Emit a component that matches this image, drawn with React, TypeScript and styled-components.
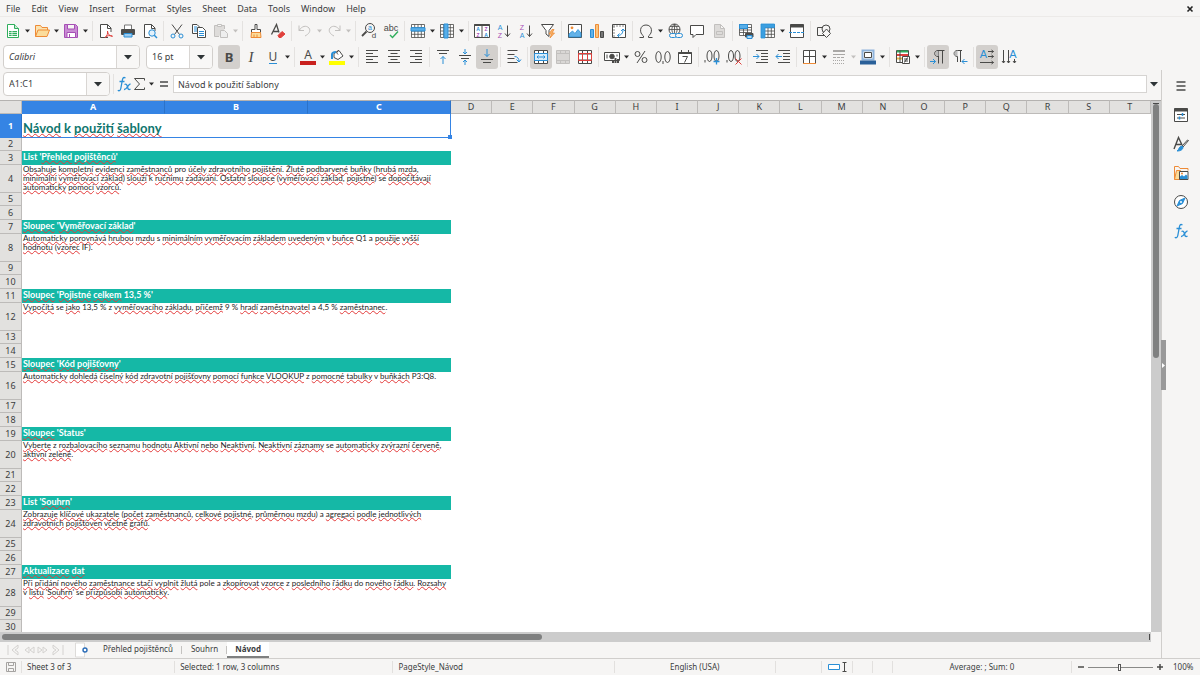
import React from "react";
import styled, { createGlobalStyle, css } from "styled-components";

/* ---------- palette ---------- */
const ink = "#4a4a48";
const blue = "#2a8fd6";
const red = "#e0403c";
const orange = "#ee8b36";
const purple = "#a64fb5";
const green = "#2fae5c";
const off = "#c2c0be";
const chrome = "#f6f5f4";
const teal = "#15b8a6";

const GlobalStyle = createGlobalStyle`
  * { box-sizing: border-box; }
  body { margin: 0; background: ${chrome}; color: #3b3d3e; font-family: "Noto Sans", sans-serif; font-size: 9px; line-height: 12px; }
  button, input { font: inherit; color: inherit; border: 0; padding: 0; margin: 0; background: none; outline: 0; }
`;

/* ---------- frame ---------- */
const Window = styled.div`
  display: flex;
  flex-direction: column;
  height: 100vh;
  overflow: hidden;
`;

const MenuBar = styled.nav`
  display: flex;
  align-items: center;
  gap: 11px;
  height: 16px;
  padding: 1px 6px 0;
  flex: none;
`;

const MenuItem = styled.button`
  white-space: nowrap;
`;

const CloseButton = styled.button`
  display: flex;
  margin-left: auto;
`;

const Toolbar = styled.div`
  display: flex;
  align-items: center;
  height: 28px;
  padding-left: 2px;
  flex: none;
  border-top: 1px solid #eceae8;
`;

const FormatBar = styled(Toolbar)`
  height: 26px;
  padding-left: 3px;
  border-top: 0;
`;

const ToolButton = styled.button<{ $pressed?: boolean }>`
  display: flex;
  align-items: center;
  justify-content: center;
  width: 22px;
  height: 24px;
  flex: none;
  border-radius: 3px;
  background: ${(p) => (p.$pressed ? "#d3d0cd" : "transparent")};
`;

const MenuArrow = styled.button<{ $muted?: boolean }>`
  display: flex;
  align-items: center;
  justify-content: center;
  width: 7px;
  height: 24px;
  flex: none;
  color: ${(p) => (p.$muted ? off : "#2b2b2b")};
`;

const Divider = styled.span<{ $afterMenu?: boolean }>`
  display: flex;
  justify-content: center;
  width: ${(p) => (p.$afterMenu ? 6 : 5)}px;
  flex: none;
  &::before {
    content: "";
    width: 1px;
    height: 20px;
    background: #e4e2e0;
  }
`;

const Combo = styled.div<{ $width: number; $gap: number }>`
  display: flex;
  width: ${(p) => p.$width}px;
  height: 24px;
  margin-right: ${(p) => p.$gap}px;
  flex: none;
  background: #fff;
  border: 1px solid #d2cfcc;
  border-radius: 4px;
  overflow: hidden;
`;

const ComboInput = styled.input<{ $italic?: boolean }>`
  flex: 1;
  min-width: 0;
  padding-left: 5px;
  font-style: ${(p) => (p.$italic ? "italic" : "normal")};
`;

const ComboArrow = styled.button`
  display: flex;
  align-items: center;
  justify-content: center;
  width: 23px;
  background: #f8f7f6;
  border-left: 1px solid #d9d6d3;
`;

const Main = styled.div`
  display: flex;
  flex: 1;
  min-height: 0;
`;

const Workspace = styled.main`
  display: flex;
  flex-direction: column;
  flex: 1;
  min-width: 0;
`;

const FormulaBar = styled.div`
  display: flex;
  align-items: center;
  height: 28px;
  margin-bottom: 2px;
  padding-left: 3px;
  flex: none;
`;

const FormulaButton = styled.button<{ $width: number }>`
  display: flex;
  align-items: center;
  justify-content: center;
  width: ${(p) => p.$width}px;
  height: 20px;
  flex: none;
`;

const FormulaInput = styled.input`
  flex: 1;
  min-width: 0;
  height: 18px;
  padding-left: 4px;
  background: #fff;
  border: 1px solid #d6d4d2;
`;

/* ---------- sheet ---------- */
const SheetArea = styled.div`
  display: flex;
  flex: 1;
  min-height: 0;
`;

const Viewport = styled.div`
  flex: 1;
  min-width: 0;
  overflow: hidden;
  background: #fff;
`;

const Grid = styled.table`
  width: 100%;
  table-layout: fixed;
  border-collapse: separate;
  border-spacing: 0;
`;

const LeadCol = styled.col`
  width: 22px;
`;

const WideCol = styled.col`
  width: 143px;
`;

const headCell = css<{ $active?: boolean }>`
  padding: 0;
  text-align: center;
  font-size: 9px;
  line-height: 12px;
  font-weight: ${(p) => (p.$active ? 700 : 400)};
  color: ${(p) => (p.$active ? "#fff" : "#3b3d3e")};
  background: ${(p) => (p.$active ? "#3584e4" : "#e2e1df")};
  border-right: 1px solid ${(p) => (p.$active ? "#2b72c8" : "#bdbbb9")};
  border-bottom: 1px solid ${(p) => (p.$active ? "#3584e4" : "#bdbbb9")};
`;

const ColumnHead = styled.th<{ $active?: boolean }>`
  ${headCell}
  height: 14px;
  border-top: 1px solid #b4b2b0;
`;

const RowHead = styled.th<{ $active?: boolean }>`
  ${headCell}
  vertical-align: middle;
`;

const SheetRow = styled.tr<{ $height: number }>`
  height: ${(p) => p.$height}px;
`;

type CellKind = "title" | "heading" | "body" | "empty";

const cellLook = {
  title: css`
    position: relative;
    padding-top: 6px;
    border: 1px solid #3584e4;
    border-width: 0 1px 1px 0;
    color: #0f766e;
    font-size: 13px;
    line-height: 17px;
    font-weight: 700;
  `,
  heading: css`
    background: ${teal};
    color: #fff;
    font-size: 9px;
    line-height: 12px;
    font-weight: 700;
  `,
  body: css`
    color: #1c1c1c;
    font-size: 8px;
    line-height: 9px;
  `,
  empty: css``,
};

const Cell = styled.td<{ $kind: CellKind }>`
  padding: 0 0 0 1px;
  vertical-align: top;
  white-space: nowrap;
  font-family: Lato, sans-serif;
  ${(p) => cellLook[p.$kind]}
`;

const Handle = styled.span`
  position: absolute;
  right: -2px;
  bottom: -2px;
  width: 4px;
  height: 4px;
  background: #3584e4;
`;

const Line = styled.div``;

const Misspelt = styled.span`
  text-decoration: underline wavy #e33b3b 1px;
  text-decoration-skip-ink: none;
  text-underline-offset: 0;
`;

const VScroll = styled.div`
  display: flex;
  flex-direction: column;
  align-items: center;
  width: 10px;
  padding-top: 2px;
  flex: none;
  background: #cccccc;
  border-top: 1px solid #a8a6a4;
`;

const VThumb = styled.div`
  width: 6px;
  height: 48%;
  border-radius: 3px;
  background: #7f8080;
`;

const HScroll = styled.div`
  display: flex;
  align-items: center;
  height: 10px;
  margin-right: 10px;
  padding: 0 1px 0 2px;
  flex: none;
  background: #cccccc;
`;

const HThumb = styled.div`
  width: 47%;
  height: 6px;
  border-radius: 3px;
  background: #7f8080;
`;

const SplitMark = styled.span<{ $flat?: boolean }>`
  width: ${(p) => (p.$flat ? 6 : 1)}px;
  height: ${(p) => (p.$flat ? 1 : 6)}px;
  flex: none;
  margin-left: ${(p) => (p.$flat ? "0" : "auto")};
  background: #4a4a4a;
`;

/* ---------- tabs ---------- */
const TabBar = styled.div`
  display: flex;
  align-items: center;
  height: 16px;
  padding-left: 5px;
  flex: none;
  font-size: 8px;
`;

const TabNav = styled.div`
  display: flex;
  width: 70px;
`;

const TabNavButton = styled.button`
  display: flex;
  justify-content: center;
  width: 15px;
`;

const AddTab = styled.button`
  display: flex;
  width: 19px;
`;

const Tab = styled.button<{ $active?: boolean }>`
  height: 16px;
  padding: ${(p) => (p.$active ? "0 8px" : "0 8px 0 9px")};
  background: ${(p) => (p.$active ? "#fff" : "transparent")};
  border-bottom: 2px solid ${(p) => (p.$active ? "#7f8080" : "transparent")};
  font-weight: ${(p) => (p.$active ? 700 : 400)};
  white-space: nowrap;
`;

const TabRule = styled.span`
  width: 1px;
  height: 8px;
  background: #c4c2c0;
`;

/* ---------- sidebar ---------- */
const Sidebar = styled.aside`
  position: relative;
  display: flex;
  flex-direction: column;
  align-items: center;
  gap: 9px;
  width: 39px;
  padding-top: 6px;
  flex: none;
  border-left: 1px solid #d0cecc;
`;

const SidebarButton = styled.button`
  display: flex;
  align-items: center;
  justify-content: center;
  width: 24px;
  height: 20px;
`;

const Grip = styled.button`
  position: absolute;
  left: -1px;
  top: 46%;
  display: flex;
  align-items: center;
  justify-content: center;
  width: 5px;
  height: 50px;
  background: #999;
`;

/* ---------- status bar ---------- */
const StatusBar = styled.footer`
  display: grid;
  grid-template-columns: 22px 153fr 218fr 221fr 161fr 46px 31px 20px 20px 179fr 128px;
  align-items: center;
  height: 17px;
  flex: none;
  border-top: 1px solid #d0cecc;
  font-size: 8px;
`;

const StatusCell = styled.div<{ $center?: boolean }>`
  display: flex;
  align-items: center;
  justify-content: ${(p) => (p.$center ? "center" : "flex-start")};
  height: 12px;
  padding-left: ${(p) => (p.$center ? 0 : 5)}px;
  border-right: 1px solid #e2e0de;
  white-space: nowrap;
`;

const ZoomCell = styled.div`
  display: flex;
  align-items: center;
  padding-left: 5px;
`;

const ZoomStep = styled.button`
  display: flex;
  align-items: center;
  justify-content: center;
  width: 8px;
  height: 12px;
`;

const ZoomRange = styled.input`
  appearance: none;
  width: 65px;
  height: 12px;
  margin: 0 3px;
  &::-webkit-slider-runnable-track {
    height: 1px;
    background: #8a8a88;
  }
  &::-webkit-slider-thumb {
    appearance: none;
    width: 3px;
    height: 7px;
    margin-top: -3px;
    background: #fff;
    border: 1px solid #555;
  }
`;

const ZoomValue = styled.span`
  margin-left: 9px;
`;

/* ---------- drawings ---------- */
const Art = ({ children, w = 16, h = 16 }: { children: React.ReactNode; w?: number; h?: number }) => (
  <svg width={w} height={h} viewBox={`0 0 ${w} ${h}`} fill="none" stroke={ink} strokeWidth="1" overflow="visible" aria-hidden="true">
    {children}
  </svg>
);

const Down = ({ big }: { big?: boolean }) =>
  big ? (
    <svg width="8" height="5" viewBox="0 0 8 5" fill="#2e3436" aria-hidden="true"><path d="M0 0h8L4 4.5z" /></svg>
  ) : (
    <svg width="5" height="4" viewBox="0 0 5 4" fill="currentColor" aria-hidden="true"><path d="M0 .5h5L2.5 3.5z" /></svg>
  );

const Glyph = ({ x, y, size, fill, children, weight, family, italic }: { x: number; y: number; size: number; fill: string; children: string; weight?: number; family?: string; italic?: boolean }) => (
  <text x={x} y={y} fontSize={size} fill={fill} stroke="none" textAnchor="middle" fontWeight={weight ?? 400} fontStyle={italic ? "italic" : "normal"} fontFamily={family ?? '"Liberation Sans", sans-serif'}>
    {children}
  </text>
);

const gridPath = "M1.5 1.5h13v13h-13zM1.5 4.7h13M1.5 8h13M1.5 11.3h13M4.7 1.5v13M8 1.5v13M11.3 1.5v13";

const icons: Record<string, React.ReactNode> = {
  new: (<><path d="M2.5 1.5h7l4 4v9h-11z" stroke={green} fill="#fff" /><path d="M9.5 1.5v4h4" stroke={green} fill="#c9ecd3" /><path d="M4 8h8v5H4z" fill={green} stroke="none" /><path d="M4 9.5h8M4 11.5h8M7 8v5" stroke="#fff" strokeWidth=".7" /></>),
  open: (<><path d="M1.5 13.5V2.5h5l1.5 2h5.5v3" stroke={orange} fill="#fbe3b0" /><path d="M1.5 13.5l2.500-6.500h11.5l-2.500 6.500z" stroke={orange} fill="#fbdc9b" /></>),
  save: (<><path d="M1.5 1.5h11l2 2v11h-13z" fill="#c98bd4" stroke={purple} /><path d="M4.5 1.5h7v4.5h-7z" fill="#f6f5f4" stroke={purple} /><path d="M4 9.5h8.500v5H4z" fill="#fff" stroke={purple} /><path d="M6.5 11v3" stroke={purple} /></>),
  pdf: (<><path d="M10 14.5H2.5v-13h7l3.500 3.500v4" fill="#fff" /><path d="M9.5 1.5v4H13" /><path d="M7 14.5c2-1.500 3-4 2.500-6.500M9.5 8c0 3 2 5 5 5.500M7 14.5c2-2 5-2.500 7.500-1.500" stroke={red} /></>),
  print: (<><path d="M4.5 6V2h7v4" fill="#fff" stroke="#777" /><rect x="1" y="6" width="14" height="6" rx="1" fill="#4d4d4b" stroke="none" /><path d="M4 10.5h8v3.500H4z" fill="#9ccbee" stroke={blue} /></>),
  preview: (<><path d="M8 14.5H2.5v-13h7l3.500 3.500v3" fill="#fff" /><path d="M9.5 1.5v4H13" /><circle cx="10" cy="10" r="3.2" stroke={blue} fill="#e3f1fb" /><path d="M12.3 12.3l2.700 2.700" stroke={blue} strokeWidth="1.5" /></>),
  cut: (<><path d="M3 1.5l7.500 10M13 1.5L5.5 11.5" /><circle cx="4" cy="13" r="2" stroke={blue} /><circle cx="12" cy="13" r="2" stroke={blue} /></>),
  copy: (<><path d="M6 10.5H1.5v-9H6l2.500 2.500" fill="#fff" /><path d="M3 4h3M3 6h3M3 8h3" stroke={blue} /><path d="M6.5 4.5h5l3 3v7h-8z" fill="#fff" /><path d="M8 8.5h5M8 10.5h5M8 12.5h5" stroke={blue} /></>),
  paste: (<g stroke={off}><path d="M6 13.5H1.5v-11h10V6" fill="#dedcda" /><path d="M4.5 1.5h4v2h-4z" fill={chrome} /><path d="M7.5 7.5h4l3 3v4h-7z" fill="#eee" /></g>),
  brush: (<><path d="M7 1.5h2v5h3.500v3h-9v-3H7z" fill="#fff" /><path d="M3.5 9.5h9l.5 5H3z" fill="#fbdc9b" stroke={orange} /><path d="M6 14.5v-3M9 14.5v-3" stroke={orange} /></>),
  clear: (<><path d="M1.5 11.5L6.5 1.5l2.500 8M3.5 8.5h5" strokeWidth="1.300" /><path d="M8 12.5l4-4 3 2.500-4 3.500H9z" fill={red} stroke={red} /></>),
  undo: <path d="M2 2.5v5h5M2 7.5C5 3 9 2 12 5c2 3 0 6-4 8" stroke={off} />,
  redo: <path d="M14 2.5v5H9M14 7.5C11 3 7 2 4 5c-2 3 0 6 4 8" stroke={off} />,
  find: (<><circle cx="9" cy="5" r="4.5" /><path d="M5.5 8.5L1 13" strokeWidth="1.800" /><Glyph x={9} y={7} size={7} fill={blue}>a</Glyph><Glyph x={13} y={15} size={8} fill={ink}>d</Glyph></>),
  spell: (<><Glyph x={8} y={8} size={9} fill={ink}>abc</Glyph><path d="M7 12l2.500 2.500L15 8.5" stroke={green} strokeWidth="1.400" /></>),
  row: (<><path d={gridPath} fill="#fff" strokeWidth=".8" /><path d="M1 4.700h14v3.300H1z" fill="#58aee8" stroke={blue} /></>),
  column: (<><path d={gridPath} fill="#fff" strokeWidth=".8" /><path d="M5 1h4v14H5z" fill="#58aee8" stroke={blue} /></>),
  sort: (<><path d="M.5 1.5h15v13H.5zM8 1.5v13" fill="#fff" /><path d="M.5 2h15" strokeWidth="2" /><Glyph x={4} y={8} size={5} fill={blue} weight={700}>A</Glyph><Glyph x={4} y={14} size={5} fill={purple} weight={700}>Z</Glyph><Glyph x={12} y={8} size={5} fill={purple} weight={700}>Z</Glyph><Glyph x={12} y={14} size={5} fill={blue} weight={700}>A</Glyph></>),
  sortAsc: (<><Glyph x={4} y={7} size={7} fill={blue}>A</Glyph><Glyph x={4} y={15} size={7} fill={purple}>Z</Glyph><path d="M11.5 2.5v11M9 10.5l2.500 3 2.500-3" /></>),
  sortDesc: (<><Glyph x={4} y={7} size={7} fill={purple}>Z</Glyph><Glyph x={4} y={15} size={7} fill={blue}>A</Glyph><path d="M11.5 2.5v11M9 10.5l2.500 3 2.500-3" /></>),
  filter: (<><path d="M1.5 1.5h12l-4.500 6v6l-3-2.500V7.5z" fill="#fff" /><path d="M12 6.5l-3 4.500h2.500l-1.500 4 4.500-5H12l2-3.500z" fill="#f8b36a" stroke={orange} strokeWidth=".8" /></>),
  image: (<><path d="M1.5 1.5h13v13h-13z" fill="#fff" /><path d="M2 14V11l3.500-3 2.500 2.500 3-4 3 3.500v4z" fill="#63b2e8" stroke={blue} strokeWidth=".8" /><circle cx="5" cy="4.800" r="1.400" fill={orange} stroke="none" /></>),
  chart: (<><path d="M1.5 6.5h3v8h-3z" fill="#63b2e8" stroke={blue} /><path d="M6.5 1.5h3v13h-3z" fill="#f9c57f" stroke={orange} /><path d="M11.5 8.5h3v6h-3z" fill="#777" /></>),
  pivot: (<><path d="M1.5 1.5h13v13h-13z" fill="#fff" /><path d="M2 3h12M3 3v11" stroke="#8a8a88" strokeDasharray="2 1" /><path d="M6.5 12.5c3.500 0 5.500-2 5.500-6M10 8l2-2 2 2M8.5 10.5l-2 2 2 2" stroke={blue} /></>),
  omega: <path d="M1.5 14.5h4v-1.500C1 10 1.500 2 8 2s7 8 2.500 11v1.500h4" />,
  link: (<><circle cx="7.5" cy="6.5" r="5.5" /><path d="M2 6.5h11M7.5 1v11M7.5 1C4 4 4 9 7.5 12M7.5 1c3.500 3 3.500 8 0 11M3 3.5h9" strokeWidth=".8" /><rect x="2.500" y="10.5" width="7" height="4" rx="2" fill={chrome} stroke={blue} /><rect x="8.500" y="10.5" width="7" height="4" rx="2" fill={chrome} stroke={blue} /></>),
  comment: <path d="M1.5 2.5h13v9H7L4 14.5v-3H1.5z" fill="#fff" />,
  header: <path d="M3.5 1.5h6l4 4v9h-10zM9.5 1.5v4h4M5.5 8.5h6v3h-6z" fill="#dddbd9" stroke={off} />,
  printArea: (<><path d="M1.5 1.5h12v11h-12zM1.5 4.5h12M1.5 7h12M1.5 9.5h12M5.5 1.5v11M9.5 1.5v11" fill="#fff" strokeWidth=".8" /><path d="M1.5 1.5h8v4h-8z" fill="#58aee8" stroke={blue} /><path d="M7.5 10.5h7.500v3.500H7.5z" fill="#4d4d4b" /><path d="M9 12.5h5v3H9z" fill="#b5dcf6" stroke={blue} /></>),
  freeze: (<><path d="M1.5 1.5h13v13h-13zM1.5 4.700h13M1.5 8h13M1.5 11.300h13M8 1.5v13M11.300 1.5v13" fill="#fff" strokeWidth=".8" /><path d="M1 1h13.500v3.700H5V15H1z" fill="#3b9fe0" stroke={blue} strokeWidth=".8" /></>),
  split: (<><path d="M1.5 1.5h13v13h-13z" fill="#fff" /><path d="M1.5 3h13" strokeWidth="3" /><path d="M0 9.5h16" stroke={blue} strokeDasharray="3 1" /></>),
  shapes: (<><path d="M1.5 4.5h7v8h-7z" /><circle cx="10" cy="6" r="4" fill={chrome} /><path d="M10.5 6l4 4.500-4 4-4-4z" fill={chrome} /></>),
  bold: <Glyph x={8} y={13} size={13} fill={ink} weight={700} family='"Noto Sans", sans-serif'>B</Glyph>,
  italic: <Glyph x={8} y={13} size={15} fill={ink} italic family='"Liberation Serif", serif'>I</Glyph>,
  underline: (<><Glyph x={8} y={12} size={12} fill={ink} family='"Noto Sans", sans-serif'>U</Glyph><path d="M4 14.5h8" stroke={blue} /></>),
  fontColor: (<><Glyph x={8} y={10} size={12} fill={ink} family='"Noto Sans", sans-serif'>A</Glyph><path d="M0 14h16" stroke="#c9211e" strokeWidth="4" /></>),
  fill: (<><path d="M5 4.5l5-3 4 5.500-5 3.500-4-2z" fill="#fff" /><path d="M10 1.5c-2 0-3 2-1 4" /><path d="M3 10V5.5C3 3 5 3 7 3" stroke={blue} strokeWidth="2" /><path d="M0 14h16" stroke="#ffff00" strokeWidth="4" /></>),
  left: <path d="M2 1.5h12M2 4.5h7M2 7.5h12M2 10.5h7M2 13.5h12" />,
  center: <path d="M2 1.5h12M4.5 4.5h7M2 7.5h12M4.5 10.5h7M2 13.5h12" />,
  right: <path d="M2 1.5h12M7 4.5h7M2 7.5h12M7 10.5h7M2 13.5h12" />,
  top: (<><path d="M2 1.5h12M4 4.5h8" /><path d="M8 15V7.5M5.5 10L8 7.5l2.500 2.500" stroke={blue} /></>),
  middle: (<><path d="M2 6.5h12M4 9.5h8" /><path d="M8 0v5M6 3l2 2 2-2M8 16v-5M6 13l2-2 2 2" stroke={blue} /></>),
  bottom: (<><path d="M2 10.5h12M4 13.5h8" /><path d="M8 0v7.500M5.5 5L8 7.5l2.500-2.500" stroke={blue} /></>),
  wrap: (<><path d="M1.5 1.5h10M1.5 5.5h7M1.5 9.5h7M1.5 13.5h10" /><path d="M8.5 7.5c3 0 4.500 2 4.500 5M10.5 10.5l2.500 2.500 2-2.500" stroke={blue} /></>),
  mergeCenter: (<><path d="M1.5 1.5h13v13h-13zM1.5 4.5h13M1.5 11.5h13M5.5 1.5v3M10.5 1.5v3M5.5 11.5v3M10.5 11.5v3" fill="#fff" /><path d="M1.5 4.5h13v7h-13zM4 8h8M5.5 6.5L4 8l1.500 1.500M10.5 6.5L12 8l-1.500 1.500" fill="#d8edfb" stroke={blue} /></>),
  merge: <path d="M1.5 1.5h13v13h-13zM1.5 4.5h13M1.5 11.5h13M5.5 1.5v3M10.5 1.5v3M5.5 11.5v3M10.5 11.5v3" fill="#d9d7d5" stroke={off} />,
  unmerge: (<><path d="M1.5 1.5h13v13h-13zM1.5 5h13M1.5 11h13M5.5 1.5v13M10.5 1.5v13" fill="#fff" /><path d="M1.5 4.5h13v7h-13zM5.5 4.5v7M10.5 4.5v7" stroke={red} /></>),
  currency: (<><path d="M.5 3.5h15v8H.5z" fill="#fff" /><circle cx="8" cy="7.5" r="2.300" fill={ink} /><path d="M3 5.5v4M13 5.5v2" /><path d="M9 14v-3M11.5 14v-5M14 14v-4" strokeWidth="2" /></>),
  percent: (<><circle cx="4.5" cy="5" r="2.500" /><circle cx="11.5" cy="11" r="2.500" /><path d="M12 2L4 14" /></>),
  decimal: (<><ellipse cx="3.500" cy="8" rx="2.700" ry="5.500" /><ellipse cx="12.500" cy="8" rx="2.700" ry="5.500" /><path d="M8 12v3" /></>),
  date: (<><path d="M1.5 3.5h13v11h-13z" fill="#fff" /><path d="M1.5 4h13" strokeWidth="2" /><path d="M4.5 1v3M11.5 1v3M5.5 7.5h5l-3 6" /></>),
  addDecimal: (<><ellipse cx="5.500" cy="7" rx="2.500" ry="5.500" /><ellipse cx="12.500" cy="7" rx="2.500" ry="5.500" /><path d="M1 11v2.500" /><path d="M12.5 9v6.500M9.5 12.5h6" stroke={blue} strokeWidth="1.300" /></>),
  delDecimal: (<><ellipse cx="5" cy="7" rx="2.500" ry="5.500" /><ellipse cx="11.500" cy="7" rx="2.500" ry="5.500" /><path d="M1 11v2.500" /><path d="M9.5 9.5l6 6M15.5 9.5l-6 6" stroke={red} /></>),
  indent: (<><path d="M3 1.5h12M8 4.5h7M8 7.5h7M8 10.5h7M3 13.5h12" /><path d="M0 7.5h6M3.5 5L6 7.5 3.5 10" stroke={blue} /></>),
  outdent: (<><path d="M3 1.5h12M8 4.5h7M8 7.5h7M8 10.5h7M3 13.5h12" /><path d="M7 7.5H1M3.5 5L1 7.5 3.5 10" stroke={blue} /></>),
  borders: (<><path d="M1.5 14V1.5h12V14M7.5 1.5V14M1.5 7.5h12" fill="#fff" /><path d="M1 14.5h13" stroke={orange} /></>),
  lines: (<g stroke="#aaa8a6"><path d="M2 2h12" strokeWidth="2" /><path d="M2 5.5h12" /><path d="M2 8.5h12" strokeDasharray="3 1" /><path d="M2 11.5h12M2 14.5h12" strokeDasharray="1 1" /></g>),
  borderColor: (<><path d="M2.5 1.5h11v9h-11z" fill="#fff" stroke="#8fb4dc" strokeWidth="2" /><path d="M4.5 3.5h7v5h-7z" /><path d="M0 13.5h16" stroke="#2a6099" strokeWidth="4" /></>),
  conditional: (<><path d="M1.5 1.5h12v12h-12z" fill="#fff" /><path d="M2 2.5h11" stroke={green} strokeWidth="2" /><path d="M2 6h11" stroke={red} strokeWidth="2" /><path d="M2 9.5h5" stroke="#e8b84a" strokeWidth="2" /><path d="M5 1.5v12" /><path d="M7.5 7.5h7v7h-7zM9 10h4M9 12h4M12.5 8.5l-3 5" fill="#fff" /></>),
  ltr: (<><path d="M14.5 1.5H8c-4.500 0-4.500 6 0 6h.5M8.5 1.5v13M12.5 1.5v13" /><path d="M8.5 2H8C5 2 5 7 8 7h.5z" fill="#bbb" stroke="none" /><path d="M0 12.5h5.500M3 10l2.500 2.500L3 15" stroke={blue} /></>),
  rtl: (<><path d="M10 1.5H5.5c-4.500 0-4.500 6 0 6V13M8.5 1.5V13" /><path d="M5.5 2h-1C2 2 2 7 4.5 7h1z" fill="#bbb" stroke="none" /><path d="M15.5 12.5H10M12.5 10L10 12.5l2.500 2.500" stroke={blue} /></>),
  horizontal: (<><Glyph x={4.500} y={9} size={11} fill={blue}>A</Glyph><path d="M9 2.5h5.500M12.5 1l2 1.500-2 1.500M9 7.5h5.500M12.5 6l2 1.500-2 1.500M1 13.5h13.500M12.5 12l2 1.500-2 1.500" /></>),
  vertical: (<><Glyph x={12} y={9} size={11} fill={blue}>A</Glyph><path d="M2.5 1v13M1 12l1.500 2L4 12M7.5 1v13M6 12l1.500 2L9 12M13.5 10v4M12 12l1.500 2 1.500-2" /></>),
  hamburger: <path d="M3.5 4h9M3.5 8h9M3.5 12h9" strokeWidth="1.600" />,
  properties: (<><path d="M1.5 1.5h13v13h-13z" fill="#fff" /><path d="M1.5 3h13" strokeWidth="3" /><path d="M4 7.5h8M4 11h8" /><path d="M9.5 6v3M6.5 9.5v3" stroke={blue} strokeWidth="1.500" /></>),
  styles: (<><path d="M1 13L5.5 1.5 9 9M3 8.5h5.500" strokeWidth="1.400" /><path d="M15.5 4.5L10 11l-1-1 5.500-6z" fill="#fff" /><path d="M10 11c0 3-3 4-6 4 2-1 2-5 5-5z" fill={blue} stroke={blue} /></>),
  gallery: (<><path d="M1.5 14.5v-13h4l1.500 2h8v2" stroke={orange} /><path d="M1.5 14.5l2-9h4v9z" fill="#fbdc9b" stroke={orange} /><path d="M6.5 6.5h8.500v8H6.5z" fill="#fff" /><path d="M7 14v-2.500l2-1.500 2 1.500 2-2 1.500 1.500v3z" fill={blue} stroke="none" /><circle cx="9" cy="8.500" r="1" fill={orange} stroke="none" /></>),
  navigator: (<><circle cx="8" cy="8" r="6.500" fill="#fff" /><path d="M12 4l-2.500 5.500L4 12l2.500-5.500z" fill={blue} stroke={blue} /><circle cx="8" cy="8" r="1" fill="#fff" stroke="none" /></>),
  functions: (<><path d="M9.5 2C7 .5 6.5 3 6.200 5L4.800 12.5c-.4 2-1.500 2.800-3 1.800M3.5 5.5h5" stroke={blue} strokeWidth="1.300" /><path d="M8.5 8.5c2-1 2.500.5 3 2.500s1 3.500 3 2M14.5 8c-2.500 0-3.500 6-6.500 5.500" stroke={blue} strokeWidth="1.300" /></>),
  sigma: <path d="M12.5 4.5v-2h-10l5 5.500-5 5.500h10v-2" />,
  equals: <path d="M4 6h8M4 10h8" strokeWidth="1.600" />,
};

/* ---------- toolbar content ---------- */
type Tool = { id: string; label: string; menu?: boolean; muted?: boolean; pressed?: boolean };
const t = (id: string, label: string, flags = ""): Tool => ({
  id,
  label,
  menu: flags.includes("m"),
  muted: flags.includes("x"),
  pressed: flags.includes("p"),
});

const standardTools: Tool[][] = [
  [t("new", "New", "m"), t("open", "Open", "m"), t("save", "Save", "m")],
  [t("pdf", "Export as PDF"), t("print", "Print"), t("preview", "Print Preview")],
  [t("cut", "Cut"), t("copy", "Copy"), t("paste", "Paste", "mx")],
  [t("brush", "Clone Formatting"), t("clear", "Clear Formatting")],
  [t("undo", "Undo", "mx"), t("redo", "Redo", "mx")],
  [t("find", "Find and Replace"), t("spell", "Spelling")],
  [t("row", "Row", "m"), t("column", "Column", "m")],
  [t("sort", "Sort"), t("sortAsc", "Sort Ascending"), t("sortDesc", "Sort Descending"), t("filter", "AutoFilter")],
  [t("image", "Insert Image"), t("chart", "Insert Chart"), t("pivot", "Insert Pivot Table")],
  [t("omega", "Special Character", "m"), t("link", "Insert Hyperlink"), t("comment", "Insert Comment"), t("header", "Headers and Footers")],
  [t("printArea", "Define Print Area"), t("freeze", "Freeze Rows and Columns", "m"), t("split", "Split Window")],
  [t("shapes", "Show Draw Functions")],
];

const formatTools: Tool[][] = [
  [t("bold", "Bold", "p"), t("italic", "Italic"), t("underline", "Underline", "m")],
  [t("fontColor", "Font Color", "m"), t("fill", "Background Color", "m")],
  [t("left", "Align Left"), t("center", "Center"), t("right", "Align Right")],
  [t("top", "Align Top"), t("middle", "Center Vertically"), t("bottom", "Align Bottom", "p")],
  [t("wrap", "Wrap Text")],
  [t("mergeCenter", "Merge and Center", "p"), t("merge", "Merge Cells"), t("unmerge", "Unmerge Cells")],
  [t("currency", "Format as Currency", "m"), t("percent", "Format as Percent"), t("decimal", "Format as Number"), t("date", "Format as Date")],
  [t("addDecimal", "Add Decimal Place"), t("delDecimal", "Delete Decimal Place")],
  [t("indent", "Increase Indent"), t("outdent", "Decrease Indent")],
  [t("borders", "Borders", "m"), t("lines", "Border Style", "mx"), t("borderColor", "Border Color", "m")],
  [t("conditional", "Conditional Formatting", "m")],
  [t("ltr", "Left-To-Right", "p"), t("rtl", "Right-To-Left")],
  [t("horizontal", "Text direction from left to right", "p"), t("vertical", "Text direction from top to bottom")],
];

const ToolGroups = ({ groups }: { groups: Tool[][] }) => (
  <>
    {groups.map((group, g) => (
      <React.Fragment key={g}>
        {g > 0 && <Divider $afterMenu={groups[g - 1][groups[g - 1].length - 1].menu} />}
        {group.map((tool) => (
          <React.Fragment key={tool.id}>
            <ToolButton aria-label={tool.label} $pressed={tool.pressed}>
              <Art>{icons[tool.id]}</Art>
            </ToolButton>
            {tool.menu && (
              <MenuArrow aria-label={`${tool.label} options`} $muted={tool.muted}>
                <Down />
              </MenuArrow>
            )}
          </React.Fragment>
        ))}
      </React.Fragment>
    ))}
  </>
);

/* ---------- sheet content ---------- */
const sections: { heading: string; lines: string[] }[] = [
  {
    heading: "List 'Přehled pojištěnců'",
    lines: [
      "Obsahuje kompletní evidenci zaměstnanců pro účely zdravotního pojištění. Žlutě podbarvené buňky (hrubá mzda,",
      "minimální vyměřovací základ) slouží k ručnímu zadávání. Ostatní sloupce (vyměřovací základ, pojistné) se dopočítávají",
      "automaticky pomocí vzorců.",
    ],
  },
  {
    heading: "Sloupec 'Vyměřovací základ'",
    lines: [
      "Automaticky porovnává hrubou mzdu s minimálním vyměřovacím základem uvedeným v buňce Q1 a použije vyšší",
      "hodnotu (vzorec IF).",
    ],
  },
  {
    heading: "Sloupec 'Pojistné celkem 13,5 %'",
    lines: ["Vypočítá se jako 13,5 % z vyměřovacího základu, přičemž 9 % hradí zaměstnavatel a 4,5 % zaměstnanec."],
  },
  {
    heading: "Sloupec 'Kód pojišťovny'",
    lines: ["Automaticky dohledá číselný kód zdravotní pojišťovny pomocí funkce VLOOKUP z pomocné tabulky v buňkách P3:Q8."],
  },
  {
    heading: "Sloupec 'Status'",
    lines: [
      "Vyberte z rozbalovacího seznamu hodnotu Aktivní nebo Neaktivní. Neaktivní záznamy se automaticky zvýrazní červeně,",
      "aktivní zeleně.",
    ],
  },
  {
    heading: "List 'Souhrn'",
    lines: [
      "Zobrazuje klíčové ukazatele (počet zaměstnanců, celkové pojistné, průměrnou mzdu) a agregaci podle jednotlivých",
      "zdravotních pojišťoven včetně grafů.",
    ],
  },
  {
    heading: "Aktualizace dat",
    lines: [
      "Při přidání nového zaměstnance stačí vyplnit žlutá pole a zkopírovat vzorce z posledního řádku do nového řádku. Rozsahy",
      "v listu 'Souhrn' se přizpůsobí automaticky.",
    ],
  },
];

const dictionary = new Set(["List", "Status", "pro", "pole", "do", "se", "s", "k", "v", "z", "a", "IF", "Q1", "P3:Q8"]);

const Checked = ({ text }: { text: string }) => (
  <>
    {text.split(" ").map((word, i) => {
      const parts = /^([('"]*)(.*?)([)'".,]*)$/.exec(word)!;
      const known = dictionary.has(parts[2]) || !/\p{L}/u.test(parts[2]);
      return (
        <React.Fragment key={i}>
          {i > 0 && " "}
          {parts[1]}
          {known ? parts[2] : <Misspelt>{parts[2]}</Misspelt>}
          {parts[3]}
        </React.Fragment>
      );
    })}
  </>
);

type RowData = { height: number; kind: CellKind; lines: string[] };
const rows: RowData[] = [
  { height: 24, kind: "title", lines: ["Návod k použití šablony"] },
  { height: 13, kind: "empty", lines: [] },
  ...sections.flatMap((s): RowData[] => [
    { height: 14, kind: "heading", lines: [s.heading] },
    { height: 28, kind: "body", lines: s.lines },
    { height: 13, kind: "empty", lines: [] },
    { height: 14, kind: "empty", lines: [] },
  ]),
];

const columns = "ABCDEFGHIJKLMNOPQRST".split("");
const menus = ["File", "Edit", "View", "Insert", "Format", "Styles", "Sheet", "Data", "Tools", "Window", "Help"];
const panels: [string, string][] = [
  ["hamburger", "Sidebar Settings"],
  ["properties", "Properties"],
  ["styles", "Styles"],
  ["gallery", "Gallery"],
  ["navigator", "Navigator"],
  ["functions", "Functions"],
];
const tabMoves: [string, string][] = [
  ["First sheet", "M2 1v10M12 1L6 6l6 5V8L9 6l3-2z"],
  ["Previous sheet", "M8 3L4 6l4 3zM13 3L9 6l4 3z"],
  ["Next sheet", "M2 3l4 3-4 3zM7 3l4 3-4 3z"],
  ["Last sheet", "M12 1v10M2 1l6 5-6 5V8l3-2-3-2z"],
];

export default function App() {
  return (
    <Window>
      <GlobalStyle />
      <MenuBar>
        {menus.map((m) => (
          <MenuItem key={m}>{m}</MenuItem>
        ))}
        <CloseButton aria-label="Close document">
          <Art w={8} h={8}><path d="M1.5 1.5l5 5M6.5 1.5l-5 5" stroke="#222" strokeWidth="1.600" /></Art>
        </CloseButton>
      </MenuBar>

      <Toolbar role="toolbar" aria-label="Standard">
        <ToolGroups groups={standardTools} />
      </Toolbar>

      <FormatBar role="toolbar" aria-label="Formatting">
        <Combo $width={137} $gap={6}>
          <ComboInput $italic aria-label="Font Name" defaultValue="Calibri" />
          <ComboArrow aria-label="Font list"><Down big /></ComboArrow>
        </Combo>
        <Combo $width={67} $gap={5}>
          <ComboInput aria-label="Font Size" defaultValue="16 pt" />
          <ComboArrow aria-label="Size list"><Down big /></ComboArrow>
        </Combo>
        <ToolGroups groups={formatTools} />
      </FormatBar>

      <Main>
        <Workspace>
          <FormulaBar>
            <Combo $width={107} $gap={1}>
              <ComboInput aria-label="Name Box" defaultValue="A1:C1" />
              <ComboArrow aria-label="Named ranges"><Down big /></ComboArrow>
            </Combo>
            <Divider />
            <FormulaButton $width={16} aria-label="Function Wizard"><Art>{icons.functions}</Art></FormulaButton>
            <FormulaButton $width={16} aria-label="Select Function"><Art>{icons.sigma}</Art></FormulaButton>
            <MenuArrow aria-label="Function list"><Down /></MenuArrow>
            <FormulaButton $width={18} aria-label="Formula"><Art>{icons.equals}</Art></FormulaButton>
            <FormulaInput aria-label="Input line" defaultValue="Návod k použití šablony" />
            <FormulaButton $width={14} aria-label="Expand Formula Bar"><Down big /></FormulaButton>
          </FormulaBar>

          <SheetArea>
            <Viewport>
              <Grid>
                <colgroup>
                  <LeadCol />
                  <WideCol />
                  <WideCol />
                  <WideCol />
                  <col span={17} />
                </colgroup>
                <thead>
                  <tr>
                    <ColumnHead aria-label="Select all" />
                    {columns.map((c, i) => (
                      <ColumnHead key={c} scope="col" $active={i < 3}>{c}</ColumnHead>
                    ))}
                  </tr>
                </thead>
                <tbody>
                  {rows.map((row, i) => (
                    <SheetRow key={i} $height={row.height}>
                      <RowHead scope="row" $active={i === 0}>{i + 1}</RowHead>
                      <Cell colSpan={3} $kind={row.kind}>
                        {row.lines.map((line) => (
                          <Line key={line}><Checked text={line} /></Line>
                        ))}
                        {row.kind === "title" && <Handle />}
                      </Cell>
                      <Cell colSpan={17} $kind="empty" />
                    </SheetRow>
                  ))}
                </tbody>
              </Grid>
            </Viewport>
            <VScroll>
              <SplitMark $flat />
              <VThumb />
            </VScroll>
          </SheetArea>
          <HScroll>
            <HThumb />
            <SplitMark />
          </HScroll>

          <TabBar>
            <TabNav>
              {tabMoves.map(([label, d]) => (
                <TabNavButton key={label} aria-label={label}>
                  <Art w={14} h={12}><path d={d} stroke="#d4d2d0" /></Art>
                </TabNavButton>
              ))}
            </TabNav>
            <AddTab aria-label="Add sheet">
              <Art w={14} h={14}>
                <path d="M.5 0h9v14h-9z" fill="#fff" stroke="#dddbd9" />
                <circle cx="10" cy="7" r="2" stroke="#2a6cb8" strokeWidth="1.400" fill="#fff" />
              </Art>
            </AddTab>
            <Tab>Přehled pojištěnců</Tab>
            <TabRule />
            <Tab>Souhrn</Tab>
            <TabRule />
            <Tab $active>Návod</Tab>
          </TabBar>
        </Workspace>

        <Sidebar>
          {panels.map(([id, label]) => (
            <SidebarButton key={id} aria-label={label}><Art>{icons[id]}</Art></SidebarButton>
          ))}
          <Grip aria-label="Hide sidebar">
            <svg width="3" height="5" viewBox="0 0 3 5" fill="#fff" aria-hidden="true"><path d="M0 0l3 2.500L0 5z" /></svg>
          </Grip>
        </Sidebar>
      </Main>

      <StatusBar>
        <StatusCell>
          <Art w={12} h={12}>
            <path d="M1.5 1.5h9v9h-9zM3.5 1.5v3h5v-3M3.5 10.5v-3h5v3" stroke="#a5a3a1" />
          </Art>
        </StatusCell>
        <StatusCell>Sheet 3 of 3</StatusCell>
        <StatusCell>Selected: 1 row, 3 columns</StatusCell>
        <StatusCell>PageStyle_Návod</StatusCell>
        <StatusCell $center>English (USA)</StatusCell>
        <StatusCell />
        <StatusCell>
          <Art w={20} h={12}>
            <path d="M1.5 3.5h11v5h-11z" stroke={blue} fill="#fff" />
            <path d="M15.5 1.5h4M15.5 10.5h4M17.5 1.5v9" />
          </Art>
        </StatusCell>
        <StatusCell />
        <StatusCell />
        <StatusCell $center>Average: ; Sum: 0</StatusCell>
        <ZoomCell>
          <ZoomStep aria-label="Zoom out"><Art w={8} h={8}><path d="M1 4h6" strokeWidth="1.500" /></Art></ZoomStep>
          <ZoomRange type="range" aria-label="Zoom" min={0} max={100} defaultValue={48} />
          <ZoomStep aria-label="Zoom in"><Art w={8} h={8}><path d="M1 4h6M4 1v6" strokeWidth="1.500" /></Art></ZoomStep>
          <ZoomValue>100%</ZoomValue>
        </ZoomCell>
      </StatusBar>
    </Window>
  );
}
